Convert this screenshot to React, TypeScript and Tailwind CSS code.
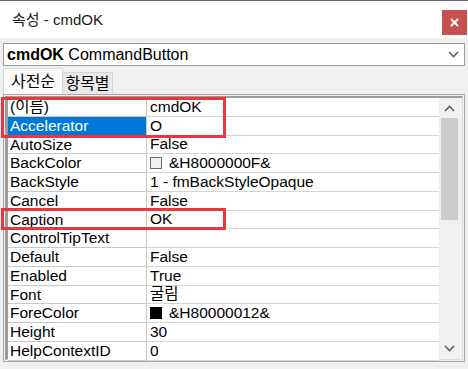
import React from "react";

type Row = { name: string; value: string; swatch?: "white" | "black" };

const rows: Row[] = [
  { name: "(이름)", value: "cmdOK" },
  { name: "Accelerator", value: "O" },
  { name: "AutoSize", value: "False" },
  { name: "BackColor", value: "&H8000000F&", swatch: "white" },
  { name: "BackStyle", value: "1 - fmBackStyleOpaque" },
  { name: "Cancel", value: "False" },
  { name: "Caption", value: "OK" },
  { name: "ControlTipText", value: "" },
  { name: "Default", value: "False" },
  { name: "Enabled", value: "True" },
  { name: "Font", value: "굴림" },
  { name: "ForeColor", value: "&H80000012&", swatch: "black" },
  { name: "Height", value: "30" },
  { name: "HelpContextID", value: "0" },
];

const font = { fontFamily: '"Liberation Sans", "Noto Sans CJK KR", sans-serif' };

const Chevron = ({ up }: { up?: boolean }) => (
  <svg width="11" height="7" viewBox="0 0 11 7" className={up ? "rotate-180" : ""}>
    <path d="M1 1 L5.5 5.5 L10 1" fill="none" stroke="#606060" strokeWidth="1.6" />
  </svg>
);

export default function App() {
  return (
    <div
      className="relative w-[468px] h-[369px] overflow-hidden bg-[#f0f0f0] border-t border-[#6b6b6b] text-black"
      style={font}
    >
      {/* title bar */}
      <div className="h-[37px] bg-white flex justify-between">
        <div className="pl-[12px] pt-[8px] text-[15px] text-[#1a1a1a]">속성 - cmdOK</div>
        <div className="mt-[9px] mr-[1px] w-[25px] h-[25px] bg-[#c75050] flex items-center justify-center">
          <svg width="9" height="9" viewBox="0 0 9 9">
            <path d="M1 1 L8 8 M8 1 L1 8" stroke="white" strokeWidth="1.8" />
          </svg>
        </div>
      </div>

      <div className="px-[3px] pt-[5px]">
        {/* object combo */}
        <div className="h-[23px] bg-white border border-[#9a9a9a] flex items-center justify-between pl-[3px] pr-[5px] text-[16px]">
          <span>
            <b>cmdOK</b> CommandButton
          </span>
          <Chevron />
        </div>

        {/* tabs */}
        <div className="flex items-end h-[28px] pt-[2px]">
          <div className="h-[26px] w-[60px] bg-[#fafafa] border border-b-0 border-[#d9d9d9] flex items-center justify-center text-[16px]">
            사전순
          </div>
          <div className="h-[22px] w-[50px] bg-[#e9e9e9] border border-b-0 border-l-0 border-[#d4d4d4] flex items-center justify-center text-[16px]">
            항목별
          </div>
        </div>

        {/* property grid */}
        <div className="h-[268px] border border-[#a8a8a8] bg-[#f0f0f0] p-[1px] flex">
          <div className="flex-1 border-t-2 border-l-[3px] border-[#9c9c9c] border-r border-b border-r-[#dcdcdc] border-b-[#dcdcdc] flex pr-[3px]">
            <div className="flex-1">
              {rows.map((r, i) => (
                <div key={r.name} className="h-[18.75px] flex text-[15.5px] leading-[18px]">
                  <div
                    className={
                      i === 1
                        ? "w-[139px] pl-[2px] bg-[#0078d7] text-white border-r border-[#c8c8c8]"
                        : "w-[139px] pl-[2px] bg-white border-r border-b border-[#c8c8c8]"
                    }
                  >
                    {r.name}
                  </div>
                  <div className="flex-1 pl-[3px] bg-white border-b border-[#d4d4d4] flex items-center gap-[7px] whitespace-nowrap overflow-hidden">
                    {r.swatch && (
                      <span
                        className={
                          r.swatch === "white"
                            ? "w-[12px] h-[12px] bg-[#f0f0f0] border border-[#6d6d6d]"
                            : "w-[12px] h-[12px] bg-black"
                        }
                      />
                    )}
                    <span className="leading-[18px]">{r.value}</span>
                  </div>
                </div>
              ))}
            </div>

            {/* scrollbar */}
            <div className="w-[20px] bg-[#f0f0f0] flex flex-col items-center">
              <div className="h-[20px] flex items-center justify-center">
                <Chevron up />
              </div>
              <div className="w-[17px] h-[102px] bg-[#cdcdcd]" />
              <div className="flex-1" />
              <div className="h-[22px] flex items-center justify-center">
                <Chevron />
              </div>
            </div>
          </div>
        </div>
      </div>

      {/* red annotation boxes */}
      <div className="absolute left-[1px] top-[96px] w-[225px] h-[41px] border-[3px] border-[#e5393f]" />
      <div className="absolute left-[1px] top-[207px] w-[225px] h-[22px] border-[3px] border-[#e5393f]" />
    </div>
  );
}
